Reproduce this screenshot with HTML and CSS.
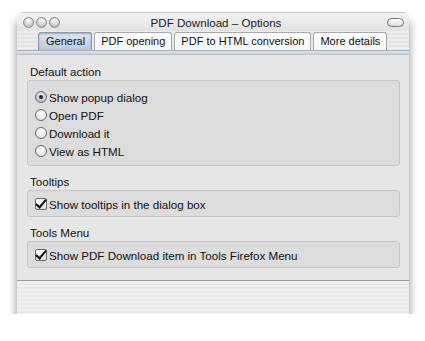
FILE: index.html
```html
<!DOCTYPE html>
<html lang="en">
<head>
    <meta charset="UTF-8">
    <title>PDF Download - Options</title>
    <link rel="stylesheet" href="styles.css">
</head>
<body>
    <div class="window">
        <div class="titlebar">
            <div class="lights">
                <span class="light"></span>
                <span class="light"></span>
                <span class="light"></span>
            </div>
            <div class="title">PDF Download – Options</div>
            <span class="pill"></span>
        </div>
        <div class="tabbar">
            <span class="tab active">General</span>
            <span class="tab">PDF opening</span>
            <span class="tab">PDF to HTML conversion</span>
            <span class="tab">More details</span>
        </div>
        <div class="tabline"></div>
        <div class="content">
            <div class="group-label">Default action</div>
            <div class="group radios">
                <label class="option"><span class="radio checked"></span>Show popup dialog</label>
                <label class="option"><span class="radio"></span>Open PDF</label>
                <label class="option"><span class="radio"></span>Download it</label>
                <label class="option"><span class="radio"></span>View as HTML</label>
            </div>
            <div class="group-label">Tooltips</div>
            <div class="group">
                <label class="option"><span class="check"></span>Show tooltips in the dialog box</label>
            </div>
            <div class="group-label">Tools Menu</div>
            <div class="group">
                <label class="option"><span class="check"></span>Show PDF Download item in Tools Firefox Menu</label>
            </div>
        </div>
        <div class="footer"></div>
    </div>
</body>
</html>
```

FILE: styles.css
```css
body {
    margin: 0;
    background: #fff;
    font-family: 'Liberation Sans', Arial, sans-serif;
    font-size: 11.6px;
    color: #111;
}
.window {
    margin: 12px 0 0 17px;
    width: 392px;
    border-radius: 6px 6px 0 0;
    background: #e6e6e6;
    box-shadow: 0 8px 10px rgba(0, 0, 0, 0.45);
    overflow: hidden;
}
.titlebar {
    height: 18px;
    display: flex;
    align-items: center;
    padding: 0 5px 0 6px;
    background: linear-gradient(#f2f2f2, #e2e2e2);
    border-top: 1px solid #c8c8c8;
}
.lights {
    display: flex;
    gap: 2px;
}
.light {
    width: 9px;
    height: 9px;
    border-radius: 50%;
    border: 1px solid #8a8a8a;
    background: radial-gradient(circle at 50% 30%, #fff, #c4c4c4 70%, #a8a8a8);
}
.title {
    flex: 1;
    text-align: center;
    color: #222;
    margin-left: -15px;
}
.pill {
    width: 15px;
    height: 7px;
    border-radius: 5px;
    border: 1px solid #777;
    background: linear-gradient(#fff, #d8d8d8);
}
.tabbar {
    height: 19px;
    display: flex;
    align-items: flex-end;
    gap: 2px;
    padding-left: 21px;
    background: repeating-linear-gradient(#ececec 0, #ececec 2px, #e4e4e4 2px, #e4e4e4 4px);
}
.tab {
    flex-shrink: 0;
    white-space: nowrap;
    height: 17px;
    padding: 0 6px;
    line-height: 17px;
    font-size: 11px;
    border: 1px solid #a8a8a8;
    border-bottom: none;
    border-radius: 3px 3px 0 0;
    background: linear-gradient(#ffffff, #f6f6f6);
    color: #111;
}
.tab.active {
    padding: 0 6px 0 7px;
    background: linear-gradient(#dde5ef, #bccada);
    border-color: #8c98a8;
    box-shadow: inset 0 1px 2px rgba(0, 0, 0, 0.25);
}
.tabline {
    height: 3px;
    border-top: 1px solid #a4aeba;
    border-bottom: 1px solid #b8c0ca;
    background: linear-gradient(#dfe5ec, #c9d1db);
}
.content {
    padding: 9px 9px 12px 10px;
    border-bottom: 1px solid #9a9a9a;
}
.group-label {
    padding-left: 3px;
    height: 16px;
    line-height: 16px;
}
.group {
    margin-bottom: 8px;
    padding: 4px 7px 3px;
    background: #dcdcdc;
    border: 1px solid #c6c6c6;
    border-radius: 3px;
}
.group.radios {
    padding-top: 7px;
    padding-bottom: 5px;
}
.group:last-child {
    margin-bottom: 0;
}
.option {
    display: flex;
    align-items: center;
    gap: 2px;
    height: 18px;
}
.radio {
    width: 10px;
    height: 10px;
    border-radius: 50%;
    border: 1px solid #6a6a6a;
    background: radial-gradient(circle at 50% 35%, #fff, #e4e4e4 70%, #c8c8c8);
    position: relative;
}
.radio.checked {
    background: radial-gradient(circle at 50% 35%, #eef2f8, #b6c4d6 70%, #98a8bc);
}
.radio.checked::after {
    content: '';
    position: absolute;
    left: 3px;
    top: 3px;
    width: 4px;
    height: 4px;
    border-radius: 50%;
    background: #222;
}
.check {
    width: 10px;
    height: 10px;
    border: 1px solid #6a6a6a;
    border-radius: 2px;
    background: linear-gradient(#fff, #dedede);
    position: relative;
}
.check::after {
    content: '';
    position: absolute;
    left: 2px;
    top: -2px;
    width: 4px;
    height: 9px;
    border-right: 2px solid #111;
    border-bottom: 2px solid #111;
    transform: rotate(40deg);
}
.footer {
    height: 33px;
    background: repeating-linear-gradient(#efefef 0, #efefef 2px, #e8e8e8 2px, #e8e8e8 4px);
}
```
